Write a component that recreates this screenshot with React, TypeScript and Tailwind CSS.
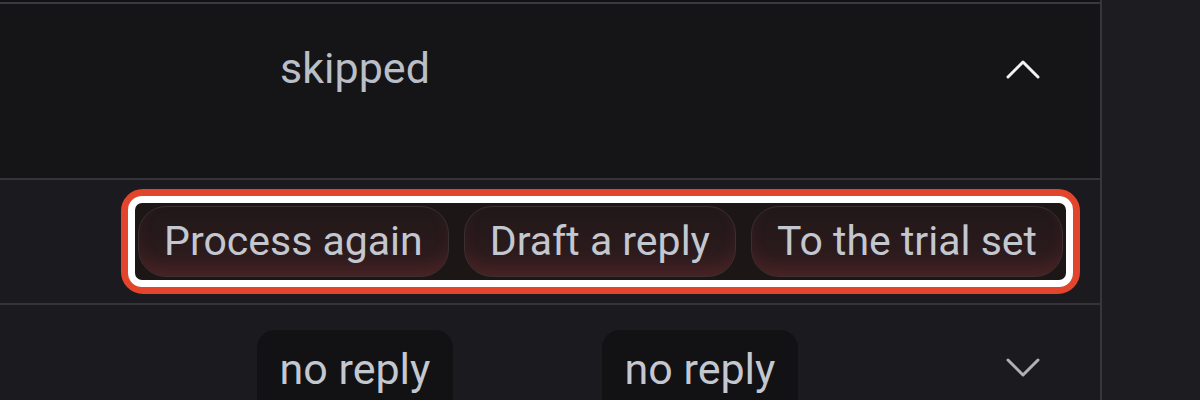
import React from "react";

const font = { fontFamily: "Roboto, 'Noto Sans', sans-serif" };

function Chevron({ up, color }: { up?: boolean; color: string }) {
  return (
    <svg width="34" height="20" viewBox="0 0 34 20" fill="none">
      <polyline
        points={up ? "2,18 17,3 32,18" : "2,2 17,17 32,2"}
        stroke={color}
        strokeWidth="3"
        strokeLinecap="round"
        strokeLinejoin="round"
      />
    </svg>
  );
}

function Btn({ label }: { label: string }) {
  return (
    <button className="shrink-0 h-[71px] px-[25px] rounded-[28px] border border-[#3a3034] bg-[linear-gradient(180deg,#211819_0%,#2a1a1c_60%,#3a2022_100%)] shadow-[inset_0_-8px_14px_rgba(140,50,50,0.18)] text-[41px] leading-none text-[#c3c7cf] whitespace-nowrap">
      {label}
    </button>
  );
}

export default function App() {
  return (
    <div className="w-[1200px] h-[400px] overflow-hidden flex bg-[#1d1c21]" style={font}>
      <div className="w-[1102px] shrink-0 flex flex-col border-r-2 border-[#37363b] bg-[#1b1a1e] overflow-hidden">
        <div className="shrink-0 h-[2px] bg-[#121114]" />
        <div className="shrink-0 h-[2px] bg-[#3a393e]" />
        {/* Row 1 */}
        <div className="shrink-0 h-[174px] bg-[#151417] grid grid-cols-[210px_290px_400px_1fr] items-start pt-[34px]">
          <div />
          <div className="flex justify-center">
            <span className="text-[43px] leading-[60px] text-[#b9bec7]">skipped</span>
          </div>
          <div />
          <div className="flex justify-end pr-[60px] pt-[21px]">
            <Chevron up color="#f2f2f2" />
          </div>
        </div>
        <div className="shrink-0 h-[2px] bg-[#35343a]" />
        {/* Row 2 */}
        <div className="shrink-0 h-[123px] flex items-center justify-end pr-[20px]">
          <div className="rounded-[22px] border-[7px] border-[#e2452c]">
            <div className="rounded-[14px] border-[7px] border-white bg-[#1d1617] p-[3px]">
              <div className="flex gap-[15px]">
                <Btn label="Process again" />
                <Btn label="Draft a reply" />
                <Btn label="To the trial set" />
              </div>
            </div>
          </div>
        </div>
        <div className="shrink-0 h-[2px] bg-[#35343a]" />
        {/* Row 3 */}
        <div className="shrink-0 grid grid-cols-[210px_290px_400px_1fr] items-start pt-[25px]">
          <div />
          <div className="flex justify-center">
            <span className="rounded-[18px] bg-[#121114] px-[23px] pt-[9px] pb-[20px] text-[43px] leading-[60px] text-[#c3c7cf] whitespace-nowrap">
              no reply
            </span>
          </div>
          <div className="flex justify-center">
            <span className="rounded-[18px] bg-[#121114] px-[23px] pt-[9px] pb-[20px] text-[43px] leading-[60px] text-[#c3c7cf] whitespace-nowrap">
              no reply
            </span>
          </div>
          <div className="flex justify-end pr-[60px] pt-[28px]">
            <Chevron color="#b0b0b6" />
          </div>
        </div>
      </div>
      <div className="flex-1 bg-[#1d1c21]" />
    </div>
  );
}
